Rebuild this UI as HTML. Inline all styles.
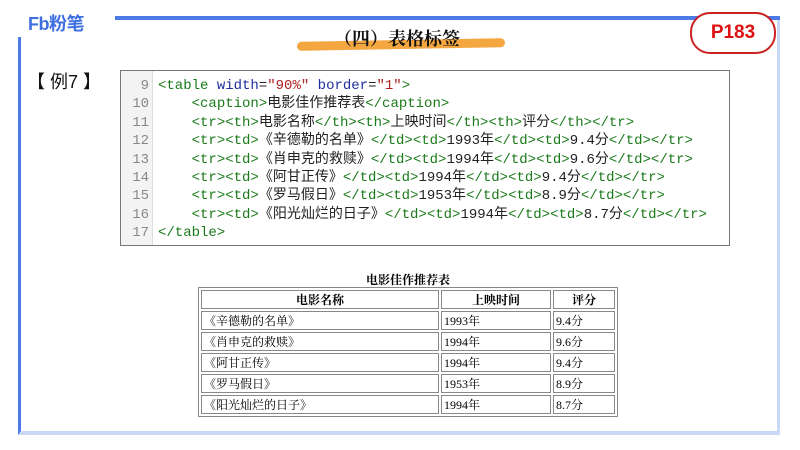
<!DOCTYPE html>
<html><head><meta charset="utf-8"><style>
body{margin:0;width:800px;height:450px;background:#fff;position:relative;overflow:hidden;font-family:"Liberation Sans","Noto Sans CJK SC",sans-serif}
.frame{position:absolute;left:18px;top:37px;width:762px;height:398px;border-left:3px solid #4c7be8;border-right:3px solid #c9d8f6;border-bottom:4px solid #c9d8f6;box-sizing:border-box}
.rtop{position:absolute;left:777px;top:17px;width:3px;height:22px;background:#c9d8f6}
.topline{position:absolute;left:115px;top:16px;width:665px;height:4px;background:#4c7be8}
.logo{position:absolute;left:28px;top:10px;font-weight:bold;color:#3d6fe0;font-size:18px;letter-spacing:-0.5px}
.title{position:absolute;left:334px;top:25px;font-size:18px;font-family:"Noto Serif CJK SC",serif;color:#111;font-weight:bold}
.brush{position:absolute;left:297px;top:40px;width:208px;height:9px;background:#f4a640;border-radius:6px;transform:rotate(-1deg)}
.p183{position:absolute;left:690px;top:12px;width:82px;height:38px;border:2px solid #c22;border-radius:20px;background:#fff;color:#d11;font-size:19px;text-align:center;line-height:38px;font-weight:bold}
.ex{position:absolute;left:27px;top:68px;font-size:18px;color:#111}
.code{position:absolute;left:120px;top:70px;width:610px;height:176px;border:1px solid #777;box-sizing:border-box;background:#fff;overflow:hidden}
.gut{position:absolute;left:0;top:0;width:31px;height:100%;background:#f3f3f3;border-right:1px solid #ddd}
.ln{position:absolute;font-family:"Liberation Mono","Noto Sans CJK SC",monospace;font-size:14px;white-space:pre;line-height:18.4px;top:6px}
.num{left:0;width:28px;text-align:right;color:#888}
.txt{left:37px;color:#222}
.g{color:#1a7a1a}.b{color:#2030a0}.r{color:#b02020}
table{position:absolute;left:198px;top:287px;width:420px;border-collapse:separate;border-spacing:2px;border:1px solid #888;font-family:"Liberation Serif","Noto Serif CJK SC",serif;font-size:12px}
td,th{border:1px solid #888;height:17px;padding:0 2px;text-align:left}
th{text-align:center}
.cap{position:absolute;left:198px;width:420px;top:271px;text-align:center;font-family:"Noto Serif CJK SC",serif;font-weight:bold;font-size:12px}
</style></head><body>
<div class="frame"></div><div class="rtop"></div><div class="topline"></div>
<div class="logo">Fb粉笔</div>
<div class="brush"></div>
<div class="title">（四）表格标签</div>
<div class="p183">P183</div>
<div class="ex">【 例7 】</div>
<div class="code"><div class="gut"></div>
<div class="ln num"> 9
10
11
12
13
14
15
16
17</div>
<div class="ln txt"><span class="g">&lt;table</span> <span class="b">width</span>=<span class="r">"90%"</span> <span class="b">border</span>=<span class="r">"1"</span><span class="g">&gt;</span>
    <span class="g">&lt;caption&gt;</span>电影佳作推荐表<span class="g">&lt;/caption&gt;</span>
    <span class="g">&lt;tr&gt;&lt;th&gt;</span>电影名称<span class="g">&lt;/th&gt;&lt;th&gt;</span>上映时间<span class="g">&lt;/th&gt;&lt;th&gt;</span>评分<span class="g">&lt;/th&gt;&lt;/tr&gt;</span>
    <span class="g">&lt;tr&gt;&lt;td&gt;</span>《辛德勒的名单》<span class="g">&lt;/td&gt;&lt;td&gt;</span>1993年<span class="g">&lt;/td&gt;&lt;td&gt;</span>9.4分<span class="g">&lt;/td&gt;&lt;/tr&gt;</span>
    <span class="g">&lt;tr&gt;&lt;td&gt;</span>《肖申克的救赎》<span class="g">&lt;/td&gt;&lt;td&gt;</span>1994年<span class="g">&lt;/td&gt;&lt;td&gt;</span>9.6分<span class="g">&lt;/td&gt;&lt;/tr&gt;</span>
    <span class="g">&lt;tr&gt;&lt;td&gt;</span>《阿甘正传》<span class="g">&lt;/td&gt;&lt;td&gt;</span>1994年<span class="g">&lt;/td&gt;&lt;td&gt;</span>9.4分<span class="g">&lt;/td&gt;&lt;/tr&gt;</span>
    <span class="g">&lt;tr&gt;&lt;td&gt;</span>《罗马假日》<span class="g">&lt;/td&gt;&lt;td&gt;</span>1953年<span class="g">&lt;/td&gt;&lt;td&gt;</span>8.9分<span class="g">&lt;/td&gt;&lt;/tr&gt;</span>
    <span class="g">&lt;tr&gt;&lt;td&gt;</span>《阳光灿烂的日子》<span class="g">&lt;/td&gt;&lt;td&gt;</span>1994年<span class="g">&lt;/td&gt;&lt;td&gt;</span>8.7分<span class="g">&lt;/td&gt;&lt;/tr&gt;</span>
<span class="g">&lt;/table&gt;</span></div>
</div>
<div class="cap">电影佳作推荐表</div>
<table>
<tr><th style="width:232px">电影名称</th><th style="width:104px">上映时间</th><th>评分</th></tr>
<tr><td>《辛德勒的名单》</td><td>1993年</td><td>9.4分</td></tr>
<tr><td>《肖申克的救赎》</td><td>1994年</td><td>9.6分</td></tr>
<tr><td>《阿甘正传》</td><td>1994年</td><td>9.4分</td></tr>
<tr><td>《罗马假日》</td><td>1953年</td><td>8.9分</td></tr>
<tr><td>《阳光灿烂的日子》</td><td>1994年</td><td>8.7分</td></tr>
</table>
</body></html>
